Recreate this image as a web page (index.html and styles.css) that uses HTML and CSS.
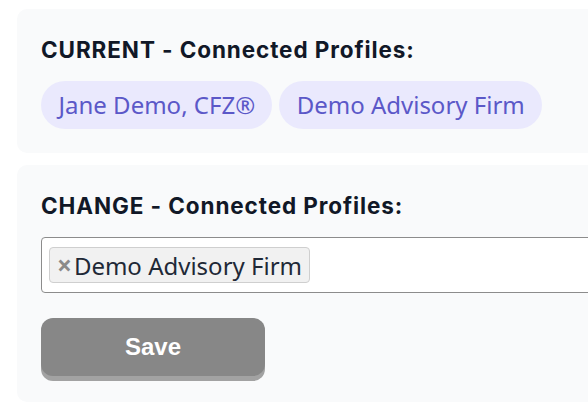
FILE: index.html
```html
<!DOCTYPE html>
<html lang="en">
<head>
<meta charset="utf-8">
<title>Connected Profiles</title>
<link rel="stylesheet" href="styles.css">
</head>
<body>
<main class="page">
  <section class="card card-current">
    <h2 class="card-title">CURRENT - Connected Profiles:</h2>
    <div class="pills">
      <span class="pill">Jane Demo, CFZ®</span>
      <span class="pill">Demo Advisory Firm</span>
    </div>
  </section>
  <section class="card card-change">
    <h2 class="card-title">CHANGE - Connected Profiles:</h2>
    <div class="select-box">
      <span class="tag"><span class="tag-remove">×</span>Demo Advisory Firm</span>
    </div>
    <button class="save-btn" type="button">Save</button>
  </section>
</main>
</body>
</html>
```

FILE: styles.css
```css
html, body {
  margin: 0;
  padding: 0;
  background: #ffffff;
  overflow: hidden;
}

.page {
  display: flex;
  flex-direction: column;
  gap: 12px;
  padding: 9px 0 0 17px;
  width: 640px;
}

.card {
  background: #f9fafb;
  border-radius: 10px;
  padding: 27px 24px 24px 24px;
}

.card-change {
  padding-bottom: 26px;
}

.card-title {
  margin: 0 0 17px 0;
  font-family: "Inter", "DejaVu Sans", sans-serif;
  font-weight: 700;
  font-size: 22.5px;
  letter-spacing: 0.9px;
  line-height: 28px;
  color: #111827;
}

.pills {
  display: flex;
  gap: 7px;
}

.pill {
  background: #eae9fd;
  color: #5b58c8;
  font-family: "Noto Sans", "Open Sans", sans-serif;
  font-size: 24px;
  line-height: 30px;
  padding: 9px 17px 9px 17.5px;
  border-radius: 24px;
}

.select-box {
  border: 1px solid #8c8c8c;
  border-radius: 4px;
  padding: 9px 7px;
  display: flex;
  background: #ffffff;
}

.tag {
  display: inline-flex;
  align-items: center;
  background: #f1f1f1;
  border: 1px solid #cfcfcf;
  border-radius: 4px;
  height: 34px;
  padding: 0 7px 0 7px;
  font-family: "Noto Sans", "Open Sans", sans-serif;
  font-size: 24px;
  color: #1f2937;
}

.tag-remove {
  color: #8a8a8a;
  font-weight: 700;
  font-size: 26px;
  line-height: 1;
  margin-right: 2px;
}

.save-btn {
  margin-top: 25px;
  width: 224px;
  height: 58px;
  border: none;
  border-radius: 12px;
  background: #878787;
  box-shadow: 0 5px 0 #a2a2a2;
  color: #ffffff;
  font-family: "Liberation Sans", Arial, sans-serif;
  font-weight: 700;
  font-size: 24px;
  padding: 0;
  display: block;
}
```
